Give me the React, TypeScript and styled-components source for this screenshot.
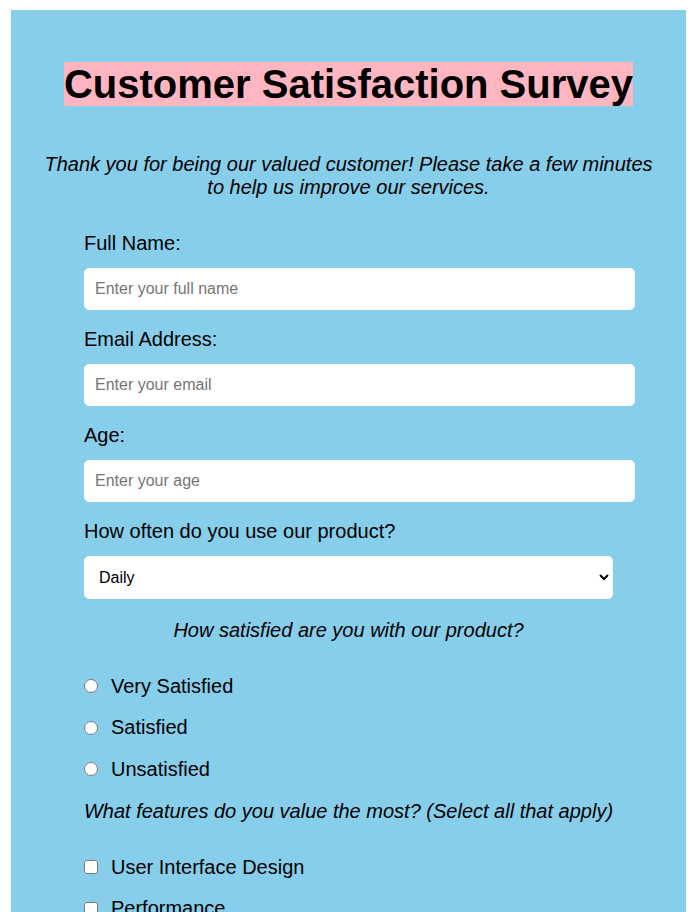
import React from "react";
import styled, { createGlobalStyle } from "styled-components";

const GlobalStyle = createGlobalStyle`
  html, body {
    margin: 0;
    padding: 0;
    background: #ffffff;
  }
  body {
    font-family: "Liberation Sans", Arial, Helvetica, sans-serif;
    color: #000000;
  }
`;

const Page = styled.div`
  padding: 10px 9px 0 11px;
`;

const Container = styled.main`
  background: #87ceeb;
  padding: 30px 30px 40px;
`;

const Title = styled.h1`
  margin: 21.5px 0 0;
  text-align: center;
  font-size: 40px;
  font-weight: bold;
  line-height: normal;
`;

const TitleHighlight = styled.span`
  background: #ffb6c1;
`;

const Intro = styled.p`
  margin: 46.5px auto 0;
  max-width: 615px;
  text-align: center;
  font-size: 20px;
  font-style: italic;
  line-height: 23px;
`;

const Form = styled.form`
  width: 529px;
  margin: 33px auto 0;
`;

const Label = styled.label`
  display: block;
  font-size: 20px;
  line-height: 23px;
  margin-bottom: 13px;
`;

const TextInput = styled.input`
  display: block;
  box-sizing: content-box;
  width: 100%;
  height: 20px;
  padding: 10px;
  margin: 0 0 18px;
  border: 1px solid #ffffff;
  border-radius: 5px;
  background: #ffffff;
  font-family: "Liberation Sans", Arial, sans-serif;
  font-size: 16px;
  outline: none;
  &::placeholder {
    color: #757575;
  }
`;

const Select = styled.select`
  display: block;
  box-sizing: border-box;
  width: 100%;
  height: 43px;
  padding: 0 10px;
  margin: 0;
  border: 1px solid #ffffff;
  border-radius: 5px;
  background: #ffffff;
  color: #000000;
  font-family: "Liberation Sans", Arial, sans-serif;
  font-size: 16px;
`;

const Question = styled.p<{ $top: number }>`
  margin: ${(p) => p.$top}px -20px 33px;
  text-align: center;
  white-space: nowrap;
  font-size: 20px;
  font-style: italic;
  line-height: 23px;
`;

const OptionList = styled.div`
  display: flex;
  flex-direction: column;
  gap: 18.5px;
`;

const OptionRow = styled.label`
  display: flex;
  align-items: center;
  height: 23px;
  font-size: 20px;
  line-height: 23px;
`;

const Choice = styled.input`
  width: 14px;
  height: 14px;
  margin: 0 13px 0 0;
  flex: none;
`;

const satisfaction = ["Very Satisfied", "Satisfied", "Unsatisfied"];
const features = [
  "User Interface Design",
  "Performance",
  "Customer Support",
  "Pricing",
];

export default function App() {
  return (
    <>
      <GlobalStyle />
      <Page>
        <Container>
          <Title>
            <TitleHighlight>Customer Satisfaction Survey</TitleHighlight>
          </Title>
          <Intro>
            Thank you for being our valued customer! Please take a few minutes
            to help us improve our services.
          </Intro>
          <Form onSubmit={(e) => e.preventDefault()}>
            <Label htmlFor="name">Full Name:</Label>
            <TextInput id="name" type="text" placeholder="Enter your full name" />
            <Label htmlFor="email">Email Address:</Label>
            <TextInput id="email" type="email" placeholder="Enter your email" />
            <Label htmlFor="age">Age:</Label>
            <TextInput id="age" type="number" placeholder="Enter your age" />
            <Label htmlFor="usage">How often do you use our product?</Label>
            <Select id="usage" defaultValue="daily">
              <option value="daily">Daily</option>
              <option value="weekly">Weekly</option>
              <option value="monthly">Monthly</option>
              <option value="rarely">Rarely</option>
            </Select>
            <Question $top={19.5}>How satisfied are you with our product?</Question>
            <OptionList>
              {satisfaction.map((s) => (
                <OptionRow key={s}>
                  <Choice type="radio" name="satisfaction" value={s} />
                  {s}
                </OptionRow>
              ))}
            </OptionList>
            <Question $top={19}>
              What features do you value the most? (Select all that apply)
            </Question>
            <OptionList>
              {features.map((f) => (
                <OptionRow key={f}>
                  <Choice type="checkbox" name="features" value={f} />
                  {f}
                </OptionRow>
              ))}
            </OptionList>
          </Form>
        </Container>
      </Page>
    </>
  );
}
